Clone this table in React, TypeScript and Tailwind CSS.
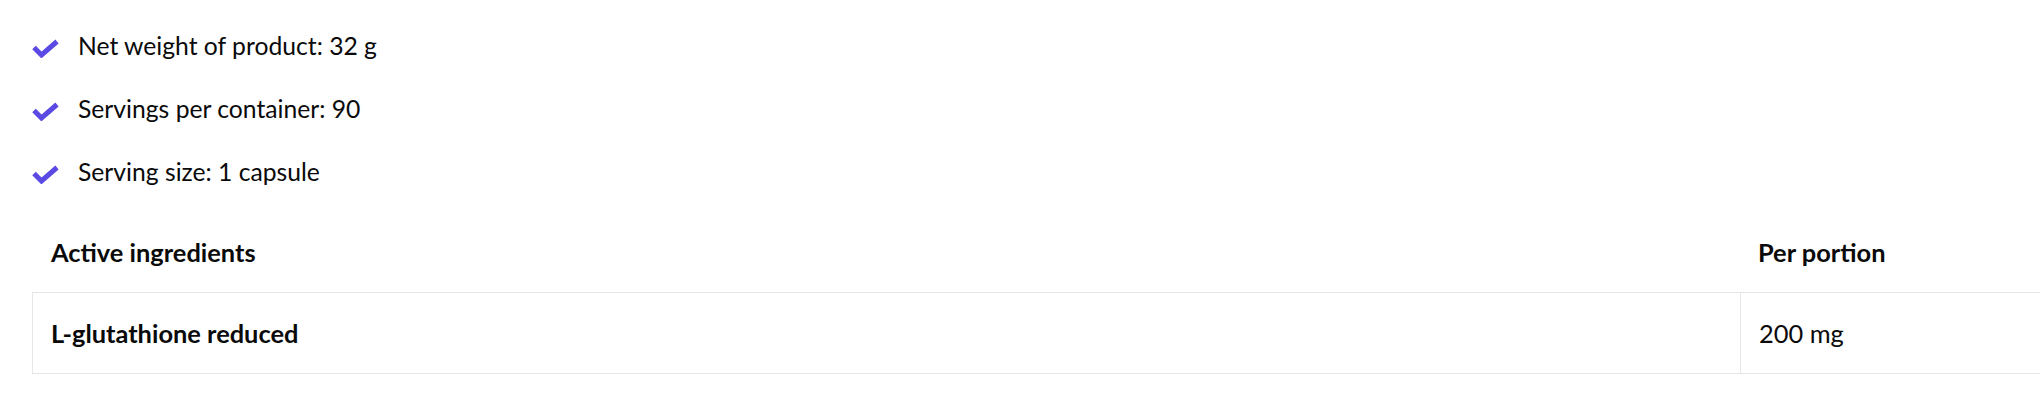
import React from "react";

function Check() {
  return (
    <svg width="27" height="19" viewBox="0 0 27 19" className="shrink-0 mt-[7px]">
      <polyline
        points="2,8.5 9.5,16 25,2.5"
        fill="none"
        stroke="#5a4ae3"
        strokeWidth="5"
        strokeLinecap="butt"
        strokeLinejoin="miter"
      />
    </svg>
  );
}

const items = [
  "Net weight of product: 32 g",
  "Servings per container: 90",
  "Serving size: 1 capsule",
];

export default function App() {
  return (
    <div className="w-[2040px] h-[400px] overflow-hidden bg-white text-[#0a0a0a] font-['Lato',sans-serif] leading-[28px]">
      <ul className="flex flex-col gap-[35px] pt-[32px] pl-[32px] text-[24.7px]">
        {items.map((t) => (
          <li key={t} className="flex items-start gap-[19px]">
            <Check />
            <span>{t}</span>
          </li>
        ))}
      </ul>
      <div className="mt-[25px] pl-[32px] text-[25.4px]">
        <div className="w-[2100px]">
          <div className="flex h-[81px] items-center font-bold">
            <div className="w-[1708px] shrink-0 pl-[19px]">Active ingredients</div>
            <div className="pl-[18px]">Per portion</div>
          </div>
          <div className="flex h-[82px] border border-r-0 border-[#e6e6e6]">
            <div className="w-[1708px] shrink-0 flex items-center pl-[18px] border-r border-[#e6e6e6] font-bold">
              L-glutathione reduced
            </div>
            <div className="flex items-center pl-[18px]">200 mg</div>
          </div>
        </div>
      </div>
    </div>
  );
}
